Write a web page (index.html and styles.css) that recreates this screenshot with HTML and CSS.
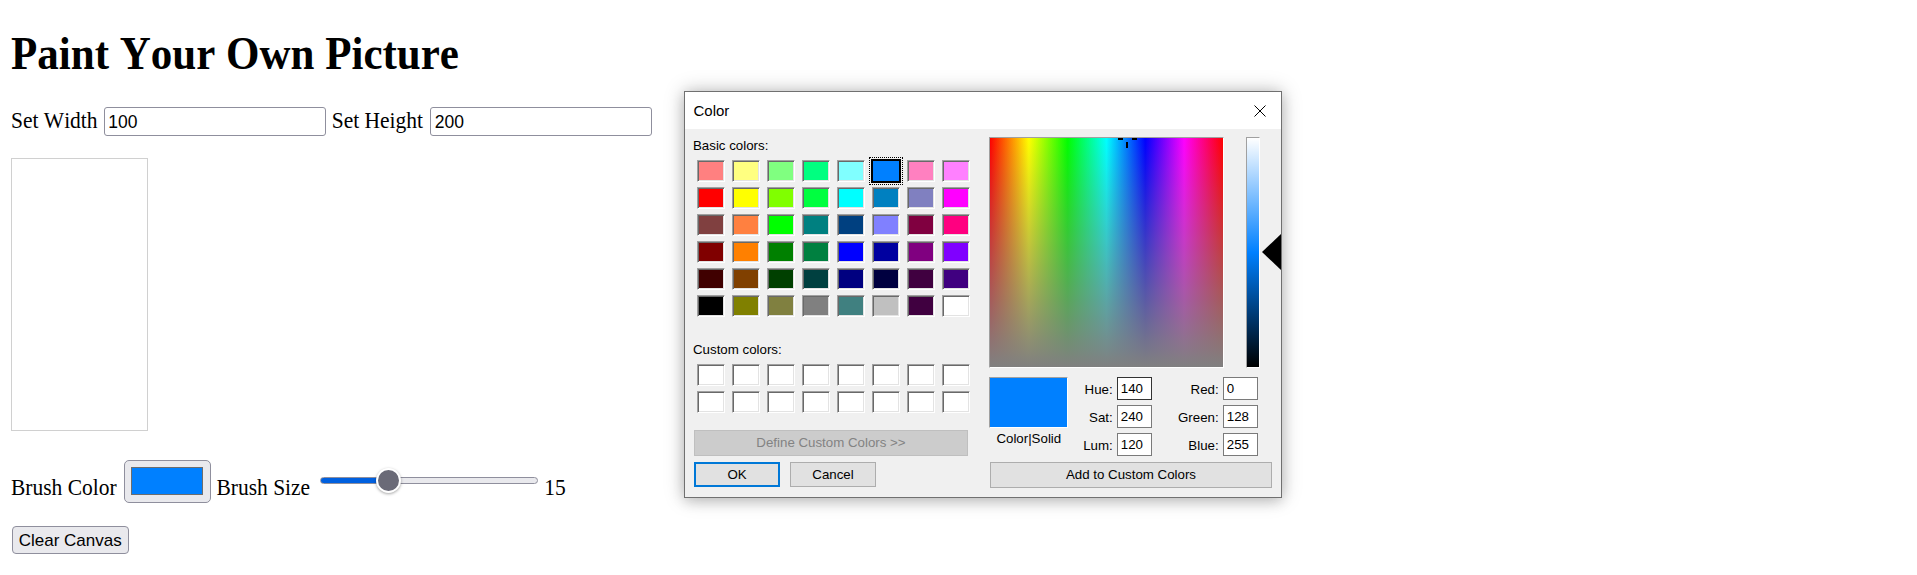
FILE: index.html
```html
<!DOCTYPE html>
<html lang="en">
<head>
<meta charset="utf-8">
<title>Paint Your Own Picture</title>
<link rel="stylesheet" href="styles.css">
</head>
<body>
<main class="page">
  <h1 class="title">Paint Your Own Picture</h1>
  <div class="size-row">
    <label class="lbl" for="set-w">Set Width</label>
    <input class="size-input in-w" id="set-w" type="text" value="100">
    <label class="lbl lbl-h" for="set-h">Set Height</label>
    <input class="size-input in-h" id="set-h" type="text" value="200">
  </div>
  <canvas class="paint-canvas" width="100" height="200"></canvas>
  <div class="brush-row">
    <span class="lbl brush-lbl">Brush Color</span>
    <input class="brush-color" type="color" value="#0080ff">
    <span class="lbl brush-lbl lbl-size">Brush Size</span>
    <input class="brush-size" type="range" min="1" max="50" value="15">
    <span class="lbl brush-lbl lbl-val">15</span>
  </div>
  <button class="clear-btn" type="button">Clear Canvas</button>
</main>

<div class="color-dialog" role="dialog" aria-label="Color">
  <div class="dlg-title">
    <span class="dlg-title-text">Color</span>
    <svg class="dlg-close" width="12" height="12" viewBox="0 0 12 12" aria-hidden="true"><path d="M0.5 0.5 L11.5 11.5 M11.5 0.5 L0.5 11.5" stroke="#000" stroke-width="1" fill="none"/></svg>
  </div>
  <div class="dlg-body">
    <div class="dlg-left">
      <div class="dlg-caption caption-basic">Basic colors:</div>
      <div class="swatch-grid grid-basic">
        <span class="swatch" style="background:#ff8080"></span>
        <span class="swatch" style="background:#ffff80"></span>
        <span class="swatch" style="background:#80ff80"></span>
        <span class="swatch" style="background:#00ff80"></span>
        <span class="swatch" style="background:#80ffff"></span>
        <span class="swatch is-selected" style="background:#0080ff"></span>
        <span class="swatch" style="background:#ff80c0"></span>
        <span class="swatch" style="background:#ff80ff"></span>

        <span class="swatch" style="background:#ff0000"></span>
        <span class="swatch" style="background:#ffff00"></span>
        <span class="swatch" style="background:#80ff00"></span>
        <span class="swatch" style="background:#00ff40"></span>
        <span class="swatch" style="background:#00ffff"></span>
        <span class="swatch" style="background:#0080c0"></span>
        <span class="swatch" style="background:#8080c0"></span>
        <span class="swatch" style="background:#ff00ff"></span>

        <span class="swatch" style="background:#804040"></span>
        <span class="swatch" style="background:#ff8040"></span>
        <span class="swatch" style="background:#00ff00"></span>
        <span class="swatch" style="background:#008080"></span>
        <span class="swatch" style="background:#004080"></span>
        <span class="swatch" style="background:#8080ff"></span>
        <span class="swatch" style="background:#800040"></span>
        <span class="swatch" style="background:#ff0080"></span>

        <span class="swatch" style="background:#800000"></span>
        <span class="swatch" style="background:#ff8000"></span>
        <span class="swatch" style="background:#008000"></span>
        <span class="swatch" style="background:#008040"></span>
        <span class="swatch" style="background:#0000ff"></span>
        <span class="swatch" style="background:#0000a0"></span>
        <span class="swatch" style="background:#800080"></span>
        <span class="swatch" style="background:#8000ff"></span>

        <span class="swatch" style="background:#400000"></span>
        <span class="swatch" style="background:#804000"></span>
        <span class="swatch" style="background:#004000"></span>
        <span class="swatch" style="background:#004040"></span>
        <span class="swatch" style="background:#000080"></span>
        <span class="swatch" style="background:#000040"></span>
        <span class="swatch" style="background:#400040"></span>
        <span class="swatch" style="background:#400080"></span>

        <span class="swatch" style="background:#000000"></span>
        <span class="swatch" style="background:#808000"></span>
        <span class="swatch" style="background:#808040"></span>
        <span class="swatch" style="background:#808080"></span>
        <span class="swatch" style="background:#408080"></span>
        <span class="swatch" style="background:#c0c0c0"></span>
        <span class="swatch" style="background:#400040"></span>
        <span class="swatch" style="background:#ffffff"></span>
      </div>
      <div class="dlg-caption caption-custom">Custom colors:</div>
      <div class="swatch-grid grid-custom">
        <span class="swatch"></span><span class="swatch"></span><span class="swatch"></span><span class="swatch"></span>
        <span class="swatch"></span><span class="swatch"></span><span class="swatch"></span><span class="swatch"></span>
        <span class="swatch"></span><span class="swatch"></span><span class="swatch"></span><span class="swatch"></span>
        <span class="swatch"></span><span class="swatch"></span><span class="swatch"></span><span class="swatch"></span>
      </div>
      <button class="dlg-btn btn-define" type="button" disabled>Define Custom Colors &gt;&gt;</button>
      <div class="dlg-actions">
        <button class="dlg-btn btn-ok" type="button">OK</button>
        <button class="dlg-btn btn-cancel" type="button">Cancel</button>
      </div>
    </div>
    <div class="dlg-right">
      <div class="picker-row">
        <div class="spectrum">
          <span class="cross cross-l"></span>
          <span class="cross cross-r"></span>
          <span class="cross cross-v"></span>
        </div>
        <div class="lum-bar"></div>
        <div class="lum-arrow"></div>
      </div>
      <div class="detail-row">
        <div class="preview-col">
          <div class="preview"></div>
          <div class="preview-label">Color|Solid</div>
        </div>
        <div class="fields">
          <label class="field-lbl">Hue:</label><input class="field field-focus" type="text" value="140">
          <label class="field-lbl">Red:</label><input class="field" type="text" value="0">
          <label class="field-lbl">Sat:</label><input class="field" type="text" value="240">
          <label class="field-lbl">Green:</label><input class="field" type="text" value="128">
          <label class="field-lbl">Lum:</label><input class="field" type="text" value="120">
          <label class="field-lbl">Blue:</label><input class="field" type="text" value="255">
        </div>
      </div>
      <button class="dlg-btn btn-add" type="button">Add to Custom Colors</button>
    </div>
  </div>
</div>
</body>
</html>
```

FILE: styles.css
```css
html, body {
  margin: 0;
  padding: 0;
  background: #ffffff;
}

body {
  font-family: "Liberation Serif", "Times New Roman", serif;
  color: #000;
}

.page {
  padding: 0 11px;
}

.title {
  margin: 30px 0 0;
  font-size: 43px;
  line-height: 50px;
  font-weight: bold;
  font-kerning: none;
  transform: scaleY(1.1);
  transform-origin: 0 39.5px;
}

.lbl {
  font-size: 21.5px;
  font-kerning: none;
  transform: scaleY(1.1);
  transform-origin: 0 19.7px;
}

.size-row {
  display: flex;
  align-items: baseline;
  margin-top: 27px;
}

.size-input {
  box-sizing: border-box;
  width: 222px;
  height: 29px;
  border: 1px solid #8f8f9d;
  border-radius: 3px;
  padding: 2px 3.5px 0;
  font-family: "Liberation Sans", Arial, sans-serif;
  font-size: 17.5px;
  color: #000;
  background: #fff;
}

.in-w { margin-left: 6.1px; }
.lbl-h { margin-left: 6px; }
.in-h { margin-left: 7.2px; }

.paint-canvas {
  display: block;
  box-sizing: border-box;
  width: 137px;
  height: 273px;
  margin-top: 22px;
  border: 1px solid #d0d0d0;
  background: #fff;
}

.brush-row {
  display: flex;
  align-items: flex-start;
  margin-top: 29px;
}

.brush-lbl {
  margin-top: 16.2px;
  line-height: 25px;
}

.brush-color {
  -webkit-appearance: none;
  appearance: none;
  box-sizing: border-box;
  width: 86.4px;
  height: 43.4px;
  margin: 0 0 0 7.6px;
  padding: 0;
  border: 1px solid #8f8f9d;
  border-radius: 5px;
  background: #e9e9ed;
}

.brush-color::-webkit-color-swatch-wrapper {
  padding: 6.4px 6.4px 7px 5.7px;
}

.brush-color::-webkit-color-swatch {
  border: 1px solid #6d6d6d;
  border-radius: 0;
}

.lbl-size { margin-left: 5.7px; }

.brush-size {
  -webkit-appearance: none;
  appearance: none;
  width: 218px;
  height: 25px;
  margin: 7.5px 0 0 9.8px;
  padding: 0;
  background: transparent;
}

.brush-size::-webkit-slider-runnable-track {
  box-sizing: border-box;
  height: 7px;
  border: 1px solid #8f8f9d;
  border-radius: 4px;
  background: linear-gradient(to right, #0060df 0, #0060df 31%, #e9e9ed 31%, #e9e9ed 100%);
}

.brush-size::-webkit-slider-thumb {
  -webkit-appearance: none;
  appearance: none;
  box-sizing: border-box;
  width: 25px;
  height: 25px;
  margin-top: -10px;
  border-radius: 50%;
  border: 2px solid #ffffff;
  background: #6a6a77;
  box-shadow: 0 1px 3px rgba(0, 0, 0, 0.35);
}

.lbl-val { margin-left: 6.2px; }

.clear-btn {
  display: block;
  box-sizing: border-box;
  width: 117px;
  height: 28px;
  margin: 22.6px 0 0 0.7px;
  padding: 2px 0 0;
  border: 1px solid #8f8f9d;
  border-radius: 4px;
  background: #e9e9ed;
  font-family: "Liberation Sans", Arial, sans-serif;
  font-size: 17px;
  color: #000;
  text-align: center;
}

/* ---------- Color dialog ---------- */

.color-dialog {
  position: absolute;
  left: 684px;
  top: 91px;
  box-sizing: border-box;
  width: 598px;
  height: 407px;
  border: 1px solid #707070;
  background: #f0f0f0;
  box-shadow: 0 0 18px rgba(0, 0, 0, 0.26), 0 4px 12px rgba(0, 0, 0, 0.12);
  font-family: "Liberation Sans", Arial, sans-serif;
  font-size: 13.3px;
  color: #000;
  overflow: hidden;
}

.dlg-title {
  display: flex;
  align-items: center;
  justify-content: space-between;
  height: 37px;
  padding: 0 15px 0 8.5px;
  background: #ffffff;
}

.dlg-title-text {
  font-size: 15px;
}

.dlg-close {
  display: block;
}

.dlg-body {
  display: flex;
  height: 368px;
  overflow: hidden;
}

.dlg-left {
  display: flex;
  flex-direction: column;
  align-items: flex-start;
  box-sizing: border-box;
  width: 304px;
  flex: 0 0 304px;
  padding-left: 8px;
}

.dlg-caption {
  line-height: 16px;
}

.caption-basic { margin-top: 9px; }
.caption-custom { margin-top: 24.6px; }

.swatch-grid {
  display: grid;
  grid-template-columns: repeat(8, 28px);
  grid-auto-rows: 22px;
  column-gap: 7.1px;
  row-gap: 5px;
  margin-left: 3.7px;
}

.grid-basic { margin-top: 6px; }
.grid-custom { margin-top: 6.4px; }

.swatch {
  display: block;
  box-sizing: border-box;
  background: #ffffff;
  border: 1px solid;
  border-color: #a0a0a0 #ffffff #ffffff #a0a0a0;
  box-shadow: inset 1px 1px 0 #696969, inset -1px -1px 0 #e3e3e3;
}

.swatch.is-selected {
  width: 30px;
  height: 24px;
  margin: -1px;
  border: 2px solid #000;
  box-shadow: none;
  outline: 1px dotted #000;
  outline-offset: 1px;
}

.dlg-btn {
  box-sizing: border-box;
  margin: 0;
  padding: 0;
  font-family: "Liberation Sans", Arial, sans-serif;
  font-size: 13.3px;
  color: #000;
  background: #e1e1e1;
  border: 1px solid #adadad;
  border-radius: 0;
  text-align: center;
}

.btn-define {
  width: 274px;
  height: 26px;
  margin: 17px 0 0 1px;
  background: #cccccc;
  border-color: #bfbfbf;
  color: #838383;
}

.dlg-actions {
  display: flex;
  gap: 10px;
  margin: 6.3px 0 0 1px;
}

.btn-ok,
.btn-cancel {
  width: 86px;
  height: 25px;
}

.btn-ok {
  border: 2px solid #0078d7;
}

.dlg-right {
  display: flex;
  flex-direction: column;
  align-items: flex-start;
  flex: 1 0 auto;
}

.picker-row {
  display: flex;
  align-items: flex-start;
  margin: 8.3px 0 0 0.3px;
}

.spectrum {
  position: relative;
  box-sizing: border-box;
  width: 235px;
  height: 231px;
  border: 1px solid;
  border-color: #a0a0a0 #ffffff #ffffff #a0a0a0;
  background:
    linear-gradient(to bottom, rgba(128, 128, 128, 0), #808080),
    linear-gradient(to right, #ff0000 0%, #ffff00 16.67%, #00ff00 33.33%, #00ffff 50%, #0000ff 66.67%, #ff00ff 83.33%, #ff0000 100%);
  overflow: hidden;
}

.cross {
  position: absolute;
  background: #000;
}

.cross-l { left: 128px; top: 0; width: 5px; height: 1.5px; }
.cross-r { left: 141.4px; top: 0; width: 5px; height: 1.5px; }
.cross-v { left: 135.7px; top: 4px; width: 2.5px; height: 5.4px; }

.lum-bar {
  box-sizing: border-box;
  width: 14.3px;
  height: 231px;
  margin-left: 21.4px;
  border: 1px solid;
  border-color: #a0a0a0 #ffffff #ffffff #a0a0a0;
  background: linear-gradient(to bottom, #ffffff 0%, #0080ff 50%, #000000 100%);
}

.lum-arrow {
  width: 0;
  height: 0;
  margin: 96.9px 0 0 2.3px;
  border-top: 18.5px solid transparent;
  border-bottom: 18.5px solid transparent;
  border-right: 19px solid #000;
}

.detail-row {
  display: flex;
  align-items: flex-start;
  margin: 8.7px 0 0 0.3px;
}

.preview-col {
  display: flex;
  flex-direction: column;
  align-items: center;
  width: 79px;
}

.preview {
  box-sizing: border-box;
  width: 79px;
  height: 51px;
  border: 1px solid;
  border-color: #a0a0a0 #ffffff #ffffff #a0a0a0;
  background: #0080ff;
}

.preview-label {
  margin-top: 3.3px;
  line-height: 16px;
  white-space: nowrap;
}

.fields {
  display: grid;
  grid-template-columns: 44.4px 35px 61.8px 35px;
  grid-auto-rows: 23.3px;
  column-gap: 4.6px;
  row-gap: 4.7px;
  align-items: center;
}

.field-lbl {
  text-align: right;
  line-height: 16px;
  padding-top: 2px;
}

.field {
  box-sizing: border-box;
  width: 35px;
  height: 23.3px;
  margin: 0;
  padding: 0 2.5px;
  border: 1px solid #7a7a7a;
  background: #ffffff;
  font-family: "Liberation Sans", Arial, sans-serif;
  font-size: 13.3px;
  color: #000;
}

.field-focus {
  border-color: #333333;
}

.btn-add {
  width: 282px;
  height: 25.7px;
  margin: 5.7px 0 0 1px;
}
```
